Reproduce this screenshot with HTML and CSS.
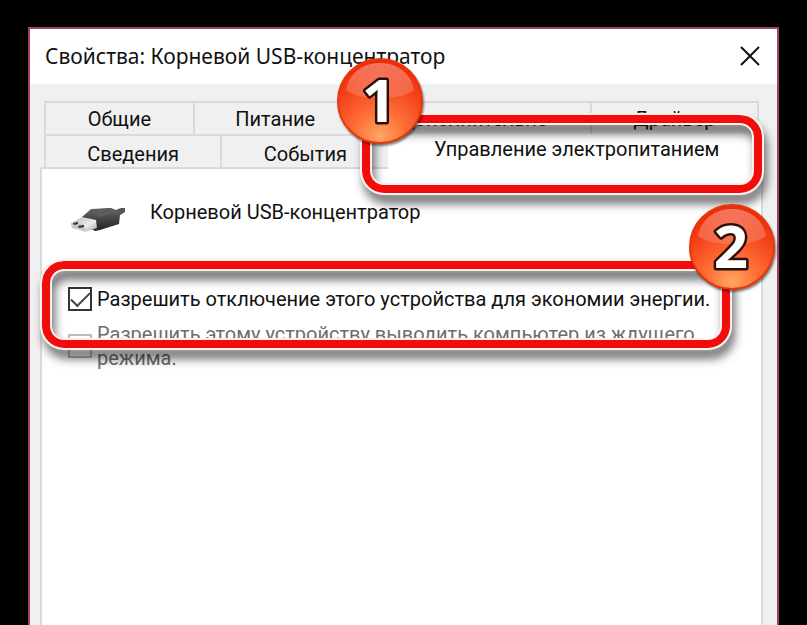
FILE: index.html
```html
<!DOCTYPE html>
<html lang="ru">
<head>
  <meta charset="UTF-8" />
  <title>Свойства: Корневой USB-концентратор</title>
  <meta name="viewport" content="width=device-width, initial-scale=1" />
  <link rel="stylesheet" href="styles.css">
</head>
<body>

  <div class="dialog">
    <div class="title-bar">
      <h1>Свойства: Корневой USB-концентратор</h1>
      <button class="close" aria-label="Закрыть">
        <svg width="20" height="20" viewBox="0 0 20 20"><path d="M1 1L19 19M19 1L1 19" stroke="#111" stroke-width="2" /></svg>
      </button>
    </div>

    <div class="content">
      <div class="tabs" role="tablist">
        <div class="tab-row first">
          <button class="tab" role="tab">Общие</button>
          <button class="tab" role="tab">Питание</button>
          <button class="tab" role="tab">Дополнительно</button>
          <button class="tab" role="tab">Драйвер</button>
        </div>
        <div class="tab-row second">
          <button class="tab" role="tab">Сведения</button>
          <button class="tab" role="tab">События</button>
          <div class="marked">
            <span class="frame"></span>
            <button class="tab active" role="tab" aria-selected="true">Управление электропитанием</button>
            <svg class="badge" viewBox="0 0 88 88">
              <defs>
                <radialGradient id="ball" cx="50%" cy="92%" r="85%">
                  <stop offset="0" stop-color="#ffa763" />
                  <stop offset="0.35" stop-color="#ff7038" />
                  <stop offset="0.75" stop-color="#f4431b" />
                  <stop offset="1" stop-color="#ee2c08" />
                </radialGradient>
                <linearGradient id="shine" x1="0" y1="0" x2="0" y2="1">
                  <stop offset="0" stop-color="#fff" stop-opacity="0.35" />
                  <stop offset="1" stop-color="#fff" stop-opacity="0.15" />
                </linearGradient>
              </defs>
              <circle cx="44" cy="44" r="42" fill="url(#ball)" stroke="#e8370b" stroke-width="2" />
              <path d="M10 33C13 16 27 6 44 6s31 10 34 27c-8 6-20 8-34 8s-26-2-34-8z" fill="url(#shine)" />
              <text x="43" y="65">1</text>
            </svg>
          </div>
        </div>
      </div>

      <div class="panel">
        <div class="device">
          <svg class="usb" width="56" height="32" viewBox="0 0 56 32">
            <defs>
              <linearGradient id="plug" x1="0" y1="0" x2="0" y2="1">
                <stop offset="0" stop-color="#6a6a6a" />
                <stop offset="0.5" stop-color="#424242" />
                <stop offset="1" stop-color="#242424" />
              </linearGradient>
              <linearGradient id="metal" x1="0" y1="0" x2="1" y2="1">
                <stop offset="0" stop-color="#b9b9b9" />
                <stop offset="0.6" stop-color="#ececec" />
                <stop offset="1" stop-color="#9a9a9a" />
              </linearGradient>
            </defs>
            <path d="M43 8L51 5h4v4l-8 5z" fill="#555" />
            <path d="M12 14L21 6l20-1 7 3 2 4-1 9-19 6-5 1-12-7z" fill="url(#plug)" />
            <path d="M20 7l20-2 8 3-19 6z" fill="#5e5e5e" />
            <path d="M1 20l11-6 14 3 1 8-12 4L2 25z" fill="url(#metal)" />
            <path d="M1 20l12 1 3 7-14-3z" fill="#c5c5c5" />
            <path d="M3 20l5-1v2l-4 1zM8 23l6-1v2l-5 1z" fill="#333" />
          </svg>
          <span>Корневой USB-концентратор</span>
        </div>

        <div class="options">
          <div class="frame"></div>
          <label class="option">
            <input type="checkbox" checked />
            <span>Разрешить отключение этого устройства для экономии энергии.</span>
          </label>
          <label class="option disabled">
            <input type="checkbox" disabled />
            <span>Разрешить этому устройству выводить компьютер из ждущего режима.</span>
          </label>
          <svg class="badge" viewBox="0 0 88 88">
            <circle cx="44" cy="44" r="42" fill="url(#ball)" stroke="#e8370b" stroke-width="2" />
            <path d="M10 33C13 16 27 6 44 6s31 10 34 27c-8 6-20 8-34 8s-26-2-34-8z" fill="url(#shine)" />
            <text x="43" y="65">2</text>
          </svg>
        </div>
      </div>
    </div>
  </div>

</body>
</html>
```

FILE: styles.css
```css
* {
  box-sizing: border-box;
  margin: 0;
  padding: 0;
}

body {
  min-height: 100vh;
  padding: 27px 28px 0;
  background: #000;
  color: #111;
  font-family: Roboto, "Liberation Sans", sans-serif;
  font-size: 20px;
  line-height: 24px;
  display: flex;
}

.dialog {
  flex: 1;
  display: flex;
  flex-direction: column;
  background: #f0f0f0;
  border: 2px solid #a3416a;
  border-bottom: none;
}

.title-bar {
  display: flex;
  justify-content: space-between;
  align-items: center;
  height: 55px;
  padding: 0 17px 2px 15px;
  background: #fff;
}

.title-bar h1 {
  font-family: "Noto Sans", sans-serif;
  font-size: 21px;
  font-weight: 400;
}

.close {
  width: 20px;
  height: 20px;
  border: none;
  background: none;
}

.close svg {
  display: block;
}

.content {
  flex: 1;
  display: flex;
  flex-direction: column;
  padding: 17px 14px 0 10px;
}

.tabs {
  padding-left: 4px;
}

.tab-row {
  display: grid;
  height: 33px;
}

.first {
  grid-template-columns: 149fr 163fr 235fr 167fr;
  margin-right: 4px;
  border-right: 2px solid #dadada;
}

.second {
  grid-template-columns: 176fr 168fr 374fr;
}

.tab {
  border: solid #dadada;
  border-width: 2px 0 0 2px;
  background: #f0f0f0;
  color: inherit;
  font: inherit;
}

.tab.active {
  width: 100%;
  height: 37px;
  padding-bottom: 10px;
  background: #fff;
  border-color: #fff;
}

.marked {
  position: relative;
}

.frame {
  position: absolute;
  z-index: 1;
  border: 8px solid #f20d0d;
  border-radius: 22px;
  outline: 2px solid #fff0ec;
  box-shadow: inset 0 0 0 2px #fff0ec;
  filter: drop-shadow(3px 9px 5px rgba(0, 0, 0, 0.55));
  pointer-events: none;
}

.marked .frame {
  inset: -19px 1px -22px -26px;
}

.marked .tab {
  position: relative;
}

.badge {
  position: absolute;
  z-index: 2;
  width: 88px;
  height: 88px;
  filter: drop-shadow(1px 2px 1px rgba(0, 0, 0, 0.5));
}

.badge text {
  font-family: "Noto Sans", sans-serif;
  font-size: 60px;
  font-weight: 700;
  text-anchor: middle;
  fill: #fff;
  stroke: #2a1008;
  stroke-width: 5px;
  stroke-linejoin: round;
  paint-order: stroke;
}

.marked .badge {
  top: -77px;
  left: -52px;
}

.panel {
  flex: 1;
  padding: 31px 27px 0 26px;
  background: #fff;
  border: 2px solid #dadada;
  border-bottom: none;
}

.device {
  display: flex;
  gap: 24px;
}

.usb {
  margin: 3px 0 0 2px;
}

.options {
  position: relative;
  margin-top: 52px;
}

.options .frame {
  inset: -26px 4px 22px -26px;
}

.options .badge {
  top: -84px;
  right: -42px;
}

.option {
  display: flex;
  gap: 5px;
  align-items: flex-start;
}

.option input {
  flex: none;
  display: grid;
  place-items: center;
  width: 24px;
  height: 24px;
  appearance: none;
  border: 2px solid #333;
  background: #fff;
}

.option input:checked::before {
  content: "";
  width: 17px;
  height: 8px;
  margin-bottom: 5px;
  border: solid #444;
  border-width: 0 0 2px 2px;
  transform: rotate(-45deg);
}

.option.disabled {
  margin-top: 11px;
  color: #6d6d6d;
}

.option.disabled input {
  margin-top: 12px;
  border-color: #bbb;
}
```
